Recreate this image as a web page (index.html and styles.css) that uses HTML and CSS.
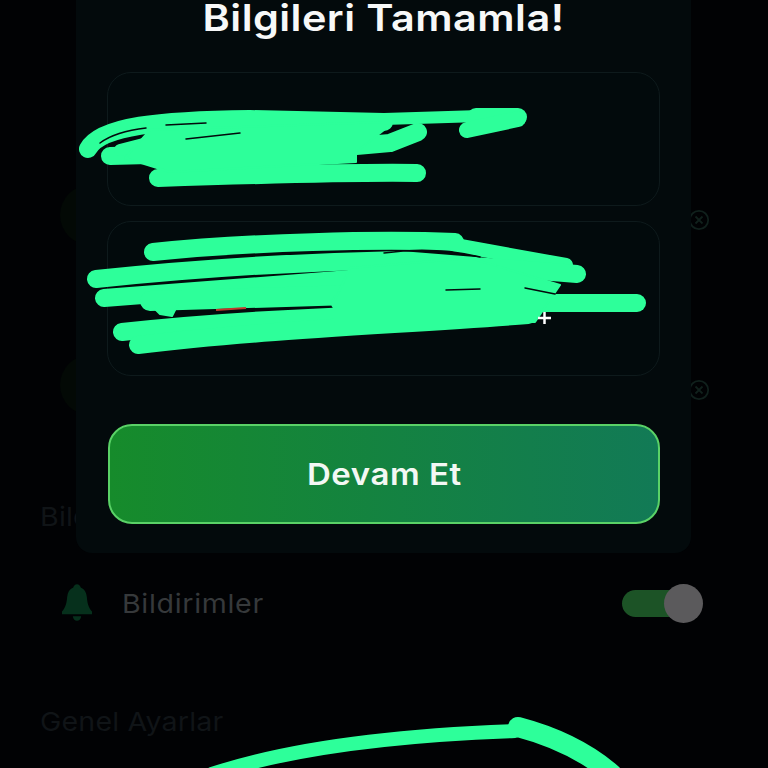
FILE: index.html
```html
<!DOCTYPE html>
<html lang="tr">
<head>
<meta charset="utf-8">
<title>Bilgileri Tamamla</title>
<link rel="stylesheet" href="styles.css">
</head>
<body>
<div class="screen">
  <main class="settings">
    <section class="account-row">
      <span class="avatar"></span>
      <svg class="clear-icon" viewBox="0 0 22 22"><circle cx="11" cy="11" r="9.2"/><path d="M7.5 7.5l7 7M14.5 7.5l-7 7"/></svg>
    </section>
    <section class="account-row">
      <span class="avatar"></span>
      <svg class="clear-icon" viewBox="0 0 22 22"><circle cx="11" cy="11" r="9.2"/><path d="M7.5 7.5l7 7M14.5 7.5l-7 7"/></svg>
    </section>
    <h2 class="section-title section-title-first">Bildirim Ayarları</h2>
    <div class="setting-row">
      <svg class="bell" viewBox="0 0 32 40"><path d="M16 0c2 0 3.500 1.500 4 3.500 4 1.500 6 5 6.500 10 .5 6 1.500 11 5.500 15.500v3H0v-3c4-4.500 5-9.500 5.500-15.500.5-5 2.500-8.500 6.500-10C12.500 1.500 14 0 16 0zM11.500 34h9c-.5 3-2.300 5-4.500 5s-4-2-4.500-5z"/></svg>
      <span class="setting-label">Bildirimler</span>
      <span class="toggle"><span class="toggle-knob"></span></span>
    </div>
    <h2 class="section-title">Genel Ayarlar</h2>
  </main>

  <div class="modal">
    <h1 class="modal-title">Bilgileri Tamamla!</h1>
    <div class="field field-name"></div>
    <div class="field field-details"></div>
    <button class="continue-button"><span class="continue-label">Devam Et</span></button>
  </div>

  <svg class="scribbles" viewBox="0 0 768 768">
    <g class="ink">
      <path class="w18" d="M88 149C100 126 160 120 250 119L384 122"/>
      <path class="w12" d="M384 119L480 116"/>
      <path class="w18" d="M476 117L518 117"/>
      <path class="w16" d="M467 130L518 119"/>
      <path class="w18" d="M110 156L300 151L390 143L418 132"/>
      <path class="w12" d="M120 150L190 132"/>
      <path class="w18" d="M158 178C250 175 350 172 417 173"/>
      <path class="fill" d="M150 130L384 122L384 130L356 152L356 162L170 172L125 158Z"/>

      <path class="w18" d="M153 252C250 242 380 239 455 242"/>
      <path class="w14" d="M455 245L566 265"/>
      <path class="w18" d="M96 279C200 268 300 262 400 260L577 274"/>
      <path class="w18" d="M104 298L350 279"/>
      <path class="w20" d="M150 301L350 295"/>
      <path class="w18" d="M122 332C250 318 400 313 530 312"/>
      <path class="w18" d="M138 345C260 330 400 325 528 315"/>
      <path class="w18" d="M340 303L637 303"/>
      <path class="fill" d="M350 268L470 258L560 285L535 322L335 322L335 300Z"/>
      <path class="fill" d="M150 304L178 304L172 316L160 314Z"/>

      <path class="arc" d="M212 774C290 748 400 735 515 731"/>
      <path class="w20" d="M518 727C560 738 590 755 612 774"/>
    </g>
    <g class="slits">
      <path d="M100 143C112 134 128 130 146 128"/>
      <path d="M166 125L206 123"/>
      <path d="M186 139L240 133"/>
      <path d="M384 253C420 248 450 250 480 257"/>
      <path d="M446 290L480 289"/>
      <path d="M525 288L555 294"/>
    </g>
    <path class="red-mark" d="M216 310L246 308"/>
    <path class="plus" d="M538 318H551M544.500 312V324"/>
  </svg>
</div>
</body>
</html>
```

FILE: styles.css
```css
* { box-sizing: border-box; }

html, body {
  margin: 0;
  background: #010204;
}

.screen {
  position: relative;
  width: 768px;
  height: 768px;
  overflow: hidden;
  background: #010204;
  font-family: "Inter", "Noto Sans", sans-serif;
}

.settings {
  display: flex;
  flex-direction: column;
  padding: 135px 40px 0;
}

.account-row {
  display: flex;
  align-items: center;
  justify-content: space-between;
  height: 170px;
  padding: 0 0 0 20px;
}

.avatar {
  width: 60px;
  height: 60px;
  margin-bottom: 10px;
  border-radius: 50%;
  background: #030905;
}

.clear-icon {
  width: 22px;
  height: 22px;
  margin-right: 18px;
  fill: none;
  stroke: #10201c;
  stroke-width: 1.8;
}

.section-title {
  margin: 0;
  font-size: 26px;
  line-height: 32px;
  font-weight: 400;
  letter-spacing: 0.15px;
  color: #101417;
  transform: scaleX(1.1);
  transform-origin: left center;
}

.section-title-first {
  margin-top: 26px;
}

.setting-row {
  display: flex;
  align-items: center;
  height: 68px;
  margin-top: 36px;
  padding: 0 46px 0 22px;
}

.setting-row + .section-title {
  margin-top: 69px;
}

.bell {
  width: 30px;
  height: 38px;
  fill: #06301c;
}

.setting-label {
  margin-left: 30px;
  font-size: 26px;
  letter-spacing: 0.6px;
  color: #36393b;
  transform: scaleX(1.1);
  transform-origin: left center;
}

.toggle {
  position: relative;
  width: 60px;
  height: 27px;
  margin-left: auto;
  border-radius: 14px;
  background: #1c5326;
}

.toggle-knob {
  position: absolute;
  top: -6px;
  right: -21px;
  width: 39px;
  height: 39px;
  border-radius: 50%;
  background: #5b5a5c;
}

.modal {
  position: absolute;
  top: -20px;
  left: 76px;
  display: flex;
  flex-direction: column;
  width: 615px;
  height: 573px;
  padding: 20px 31px 0;
  border-radius: 0 0 16px 16px;
  background: #030a0c;
}

.modal-title {
  margin: 0;
  font-size: 37px;
  line-height: 36px;
  font-weight: 600;
  letter-spacing: 0.4px;
  text-align: center;
  color: #f7f8f8;
  transform: scaleX(1.12);
}

.field {
  border: 1px solid #0e1a1c;
  border-radius: 24px;
  background: #020a0c;
}

.field-name {
  height: 134px;
  margin-top: 36px;
}

.field-details {
  height: 155px;
  margin-top: 15px;
}

.continue-button {
  height: 100px;
  margin: 48px 0 0 1px;
  border: 2px solid #5ad267;
  border-radius: 24px;
  background: linear-gradient(90deg, #168b2b, #127a56);
  font-family: inherit;
  font-size: 30px;
  font-weight: 600;
  letter-spacing: 0.5px;
  color: #f3f8f4;
}

.continue-label {
  display: inline-block;
  transform: scaleX(1.1);
}

.scribbles {
  position: absolute;
  top: 0;
  left: 0;
  width: 768px;
  height: 768px;
}

.ink path {
  fill: none;
  stroke: #2dff9a;
  stroke-linecap: round;
  stroke-linejoin: round;
}

.ink .w12 { stroke-width: 12; }
.ink .w14 { stroke-width: 14; }
.ink .w16 { stroke-width: 16; }
.ink .w18 { stroke-width: 18; }
.ink .w20 { stroke-width: 20; }
.ink .arc { stroke-width: 14; }
.ink .fill { fill: #2dff9a; stroke-width: 2; }

.slits path {
  fill: none;
  stroke: #030a0c;
  stroke-width: 1.5;
  stroke-linecap: round;
}

.red-mark {
  fill: none;
  stroke: #c0392b;
  stroke-width: 2;
}

.plus {
  fill: none;
  stroke: #ffffff;
  stroke-width: 2.5;
}
```
